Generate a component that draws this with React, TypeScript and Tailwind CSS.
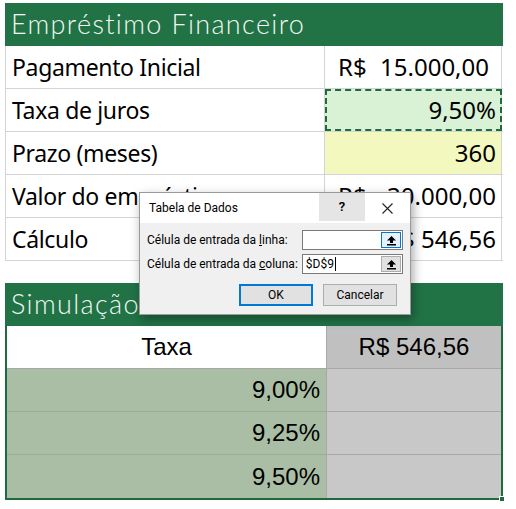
import React from 'react';

const body = "font-['Noto_Sans',sans-serif]";
const arial = "font-['Liberation_Sans',Arial,sans-serif]";
const title = "font-['Lato',sans-serif]";
const ui = "font-['Roboto','Noto_Sans',sans-serif]";

function RefIcon() {
  return (
    <svg width="11" height="11" viewBox="0 0 11 11">
      <path d="M5.5 1 L10 5.5 L7 5.5 L7 8 L4 8 L4 5.5 L1 5.5 Z" fill="#000" />
      <rect x="1" y="9" width="9" height="1.5" fill="#000" />
    </svg>
  );
}

function TopRow({ label, children, cellClass = '' }: { label: string; children: React.ReactNode; cellClass?: string }) {
  return (
    <div className="grid h-[43px] grid-cols-[320px_177px] border-b border-[#d4d4d4]">
      <div className={`flex items-center border-r border-l border-[#d4d4d4] pl-[6px] text-[23px] tracking-[-0.015em] text-black ${body}`}>{label}</div>
      <div className={`flex items-center border-r border-[#d4d4d4] pr-[5px] text-[24px] text-black ${body} ${cellClass}`}>{children}</div>
    </div>
  );
}

export default function App() {
  return (
    <div className="relative h-[509px] w-[516px] overflow-hidden bg-white">
      <div className="ml-[5px] mt-[3px] w-[498px]">
        <div className={`flex h-[43px] items-center bg-[#217346] pl-[6px] text-[27px] font-light tracking-[0.05em] text-[#f2f7f2] ${title}`}>
          Empréstimo Financeiro
        </div>
        <TopRow label="Pagamento Inicial">
          <div className="flex w-full justify-between pl-[13px] pr-[7px]">
            <span>R$</span>
            <span>15.000,00</span>
          </div>
        </TopRow>
        <TopRow label="Taxa de juros" cellClass="justify-end bg-[#d9f1d4] outline-2 -outline-offset-2 outline-dashed outline-[#1e6b3e]">
          9,50%
        </TopRow>
        <TopRow label="Prazo (meses)" cellClass="justify-end bg-[#f3f8bf]">
          360
        </TopRow>
        <TopRow label="Valor do empréstimo">
          <div className="flex w-full justify-between pl-[13px]">
            <span>R$</span>
            <span>30.000,00</span>
          </div>
        </TopRow>
        <TopRow label="Cálculo" cellClass="justify-end">
          R$ 546,56
        </TopRow>

        <div className={`mt-[22px] flex h-[43px] items-center bg-[#217346] pl-[6px] text-[27px] font-light tracking-[0.05em] text-[#f2f7f2] ${title}`}>
          Simulação Variável Coluna
        </div>
        <div className="relative border-2 border-t-0 border-[#1f6b3f]">
          <div className={`grid grid-cols-[319px_175px] text-[24px] text-black ${arial}`}>
            <div className="flex h-[43px] items-center justify-center border-b border-[#a8a8a8] bg-white">Taxa</div>
            <div className="flex h-[43px] items-center justify-center border-b border-l border-[#a8a8a8] bg-[#c0c0c0]">R$ 546,56</div>
            {['9,00%', '9,25%', '9,50%'].map((v, i) => (
              <React.Fragment key={v}>
                <div className={`flex h-[43px] items-center justify-end bg-[#a9bea5] pr-[6px] ${i < 2 ? 'border-b border-[#a0a89e]' : ''}`}>{v}</div>
                <div className={`h-[43px] border-l border-[#a8a8a8] bg-[#c8c8c8] ${i < 2 ? 'border-b' : ''}`} />
              </React.Fragment>
            ))}
          </div>
          <div className="absolute -right-[4px] -bottom-[4px] h-[6px] w-[6px] border border-white bg-[#1f6b3f]" />
        </div>
      </div>

      {/* Data table dialog */}
      <div className={`absolute left-[139px] top-[192px] w-[272px] border border-[#9a9a9a] bg-[#f0f0f0] text-[12px] text-black shadow-[2px_4px_10px_rgba(0,0,0,0.35)] ${ui}`}>
        <div className="flex h-[30px] items-center bg-white">
          <span className="flex-1 pl-[9px]">Tabela de Dados</span>
          <div className="flex h-[28px] w-[46px] items-center justify-center self-start bg-[#e5e5e5] text-[13px] font-semibold">?</div>
          <div className="flex h-[28px] w-[45px] items-center justify-center">
            <svg width="11" height="11" viewBox="0 0 11 11">
              <path d="M0.5 0.5 L10.5 10.5 M10.5 0.5 L0.5 10.5" stroke="#222" strokeWidth="1.1" />
            </svg>
          </div>
        </div>
        <div className="px-[7px] pb-[8px] pt-[7px]">
          <div className="flex h-[20px] items-center">
            <span className="w-[156px] whitespace-nowrap">
              Célula de entrada da <span className="underline">l</span>inha:
            </span>
            <div className="flex h-[20px] w-[102px] border border-[#7a7a7a] bg-white">
              <div className="flex-1" />
              <div className="m-[1px] flex w-[20px] items-center justify-center border border-[#0078d7] bg-[#e5f1fb]">
                <RefIcon />
              </div>
            </div>
          </div>
          <div className="mt-[4px] flex h-[20px] items-center">
            <span className="w-[156px] whitespace-nowrap">
              Célula de entrada da <span className="underline">c</span>oluna:
            </span>
            <div className="flex h-[20px] w-[102px] border border-[#7a7a7a] bg-white">
              <div className="flex flex-1 items-center pl-[3px]">
                $D$9<span className="ml-[1px] h-[14px] w-px bg-black" />
              </div>
              <div className="m-[1px] flex w-[20px] items-center justify-center border border-[#adadad] bg-[#e1e1e1]">
                <RefIcon />
              </div>
            </div>
          </div>
          <div className="mt-[10px] flex justify-end gap-[10px] pr-[6px]">
            <button className="h-[22px] w-[74px] border-2 border-[#0078d7] bg-[#e1e1e1]">OK</button>
            <button className="h-[22px] w-[74px] border border-[#adadad] bg-[#e1e1e1]">Cancelar</button>
          </div>
        </div>
      </div>
    </div>
  );
}
